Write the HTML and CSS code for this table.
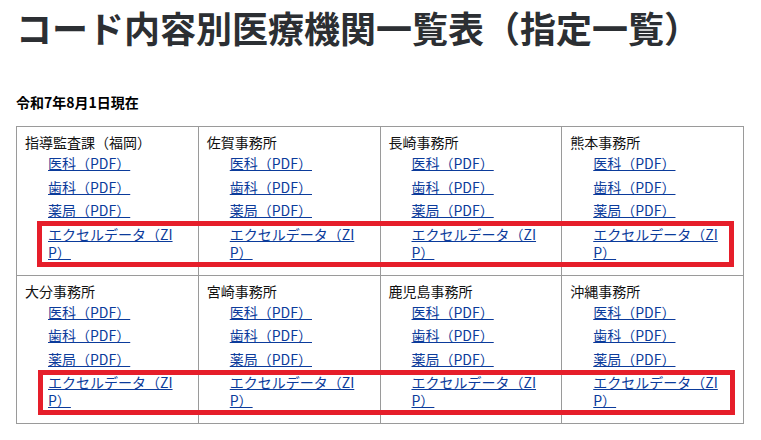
FILE: index.html
```html
<!DOCTYPE html>
<html lang="ja">
<head>
<meta charset="utf-8">
<title>コード内容別医療機関一覧表（指定一覧）</title>
<link rel="stylesheet" href="styles.css">
</head>
<body>
<div class="page">
  <h1 class="title">コード内容別医療機関一覧表（指定一覧）</h1>
  <p class="date">令和7年8月1日現在</p>
  <div class="table-wrap">
    <table class="offices">
      <tr>
        <td>
          <div class="office">指導監査課（福岡）</div>
          <ul class="files">
            <li><a href="#">医科（PDF）</a></li>
            <li><a href="#">歯科（PDF）</a></li>
            <li><a href="#">薬局（PDF）</a></li>
            <li><a href="#">エクセルデータ（ZIP）</a></li>
          </ul>
        </td>
        <td>
          <div class="office">佐賀事務所</div>
          <ul class="files">
            <li><a href="#">医科（PDF）</a></li>
            <li><a href="#">歯科（PDF）</a></li>
            <li><a href="#">薬局（PDF）</a></li>
            <li><a href="#">エクセルデータ（ZIP）</a></li>
          </ul>
        </td>
        <td>
          <div class="office">長崎事務所</div>
          <ul class="files">
            <li><a href="#">医科（PDF）</a></li>
            <li><a href="#">歯科（PDF）</a></li>
            <li><a href="#">薬局（PDF）</a></li>
            <li><a href="#">エクセルデータ（ZIP）</a></li>
          </ul>
        </td>
        <td>
          <div class="office">熊本事務所</div>
          <ul class="files">
            <li><a href="#">医科（PDF）</a></li>
            <li><a href="#">歯科（PDF）</a></li>
            <li><a href="#">薬局（PDF）</a></li>
            <li><a href="#">エクセルデータ（ZIP）</a></li>
          </ul>
        </td>
      </tr>
      <tr>
        <td>
          <div class="office">大分事務所</div>
          <ul class="files">
            <li><a href="#">医科（PDF）</a></li>
            <li><a href="#">歯科（PDF）</a></li>
            <li><a href="#">薬局（PDF）</a></li>
            <li><a href="#">エクセルデータ（ZIP）</a></li>
          </ul>
        </td>
        <td>
          <div class="office">宮崎事務所</div>
          <ul class="files">
            <li><a href="#">医科（PDF）</a></li>
            <li><a href="#">歯科（PDF）</a></li>
            <li><a href="#">薬局（PDF）</a></li>
            <li><a href="#">エクセルデータ（ZIP）</a></li>
          </ul>
        </td>
        <td>
          <div class="office">鹿児島事務所</div>
          <ul class="files">
            <li><a href="#">医科（PDF）</a></li>
            <li><a href="#">歯科（PDF）</a></li>
            <li><a href="#">薬局（PDF）</a></li>
            <li><a href="#">エクセルデータ（ZIP）</a></li>
          </ul>
        </td>
        <td>
          <div class="office">沖縄事務所</div>
          <ul class="files">
            <li><a href="#">医科（PDF）</a></li>
            <li><a href="#">歯科（PDF）</a></li>
            <li><a href="#">薬局（PDF）</a></li>
            <li><a href="#">エクセルデータ（ZIP）</a></li>
          </ul>
        </td>
      </tr>
    </table>
    <div class="highlight highlight-1"></div>
    <div class="highlight highlight-2"></div>
  </div>
</div>
</body>
</html>
```

FILE: styles.css
```css
html, body {
  margin: 0;
  padding: 0;
  background: #ffffff;
}

body {
  font-family: "Noto Sans CJK JP", "Noto Sans", sans-serif;
  color: #111111;
}

.page {
  padding: 0 16px;
}

.title {
  margin: 0;
  padding-top: 7px;
  font-size: 36px;
  line-height: 40px;
  font-weight: 700;
  color: #2c2f33;
  white-space: nowrap;
}

.date {
  margin: 46px 0 0;
  font-size: 14px;
  line-height: 18px;
  font-weight: 700;
  color: #000000;
}

.table-wrap {
  position: relative;
  margin-top: 15px;
  width: 728px;
}

.offices {
  width: 728px;
  table-layout: fixed;
  border-collapse: collapse;
  border: 1px solid #9a9a9a;
}

.offices td {
  border: 1px solid #9a9a9a;
  vertical-align: top;
  padding: 6px 8px 14px 8px;
}

.office {
  font-size: 14px;
  line-height: 18px;
  color: #111111;
}

.files {
  list-style: none;
  margin: 3px 0 0;
  padding: 0 12px 0 23px;
}

.files li {
  font-size: 14px;
  line-height: 18px;
  margin-top: 5.5px;
  word-break: break-all;
}

.files li:first-child {
  margin-top: 0;
}

.files a {
  color: #0b3b9b;
  text-decoration: underline;
}

.highlight {
  position: absolute;
  border: 5px solid #e61e2a;
  box-sizing: border-box;
  pointer-events: none;
}

.highlight-1 {
  left: 21px;
  top: 95px;
  width: 697px;
  height: 46px;
}

.highlight-2 {
  left: 22px;
  top: 244px;
  width: 697px;
  height: 45px;
}
```
